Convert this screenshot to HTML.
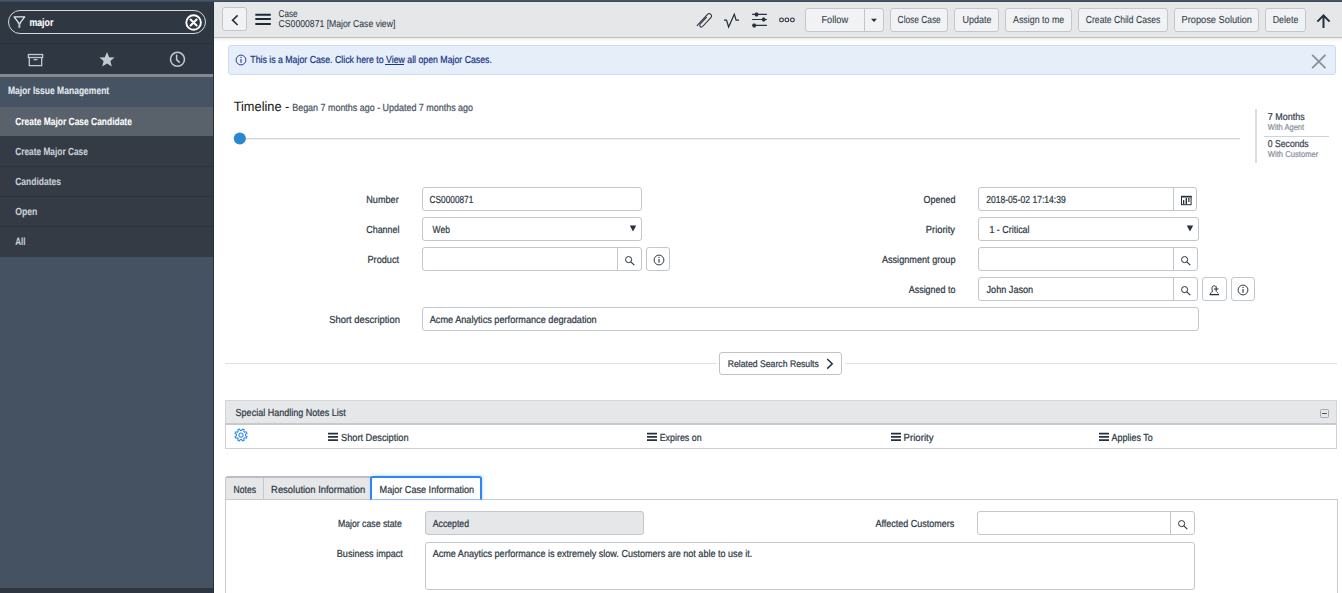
<!DOCTYPE html>
<html><head><meta charset="utf-8">
<style>
html,body{margin:0;padding:0;}
body{width:1342px;height:593px;overflow:hidden;position:relative;background:#fff;font-family:"Liberation Sans",sans-serif;}
.b{position:absolute;box-sizing:border-box;}
.ov{position:absolute;left:0;top:0;z-index:10;pointer-events:none;}
.btn{position:absolute;box-sizing:border-box;height:24px;top:8px;background:#f1f2f4;border:1px solid #c3c7cb;border-radius:3px;}
.inp{position:absolute;box-sizing:border-box;height:24px;background:#fff;border:1px solid #c3c6ca;border-radius:3px;}
.ico{position:absolute;z-index:5;}
</style></head><body>
<!-- top strip -->
<div class="b" style="left:0;top:0;width:1342px;height:2px;background:linear-gradient(#475666 0,#475666 1px,#3d4b5b 1px);z-index:3"></div>
<!-- NAV -->
<div class="b" style="left:0;top:2px;width:213px;height:591px;background:#2f3842"></div>
<div class="b" style="left:213px;top:2px;width:1px;height:591px;background:#29303a"></div>
<div class="b" style="left:8px;top:10px;width:198px;height:24px;border:1.5px solid #d8d9db;border-radius:12px"></div>
<svg class="ico" style="left:12px;top:15px" width="16" height="16" viewBox="0 0 16 16">
  <path d="M2.1 1.9 H12.7 L8.5 7.3 V8.2 H6.3 V7.3 Z" fill="none" stroke="#e8eaec" stroke-width="1.25" stroke-linejoin="round"/>
  <path d="M6.9 8.6 V12.6 H7.9 V8.6" fill="#aeb4bb" stroke="#c9ced4" stroke-width="0.9"/>
</svg>
<svg class="ico" style="left:184px;top:13px" width="19" height="19" viewBox="0 0 19 19">
  <circle cx="9.6" cy="9.5" r="7.3" fill="none" stroke="#ffffff" stroke-width="1.9"/>
  <path d="M6.6 6.5 L12.6 12.5 M12.6 6.5 L6.6 12.5" stroke="#ffffff" stroke-width="2.1" stroke-linecap="round"/>
</svg>
<div class="b" style="left:0;top:43px;width:213px;height:1px;background:#29303a"></div>
<!-- icons row -->
<svg class="ico" style="left:26px;top:52px" width="19" height="16" viewBox="0 0 19 16">
  <rect x="2.4" y="2.5" width="14.2" height="3" fill="none" stroke="#c4cad1" stroke-width="1.3"/>
  <path d="M3.3 5.5 V13.6 H15.7 V5.5" fill="none" stroke="#c4cad1" stroke-width="1.3"/>
  <path d="M7.6 7.6 H11.4" stroke="#c4cad1" stroke-width="1.3"/>
</svg>
<svg class="ico" style="left:98px;top:51px" width="18" height="17" viewBox="0 0 18 17">
  <path d="M9 1 L11.2 6.2 L16.6 6.5 L12.4 10 L13.8 15.5 L9 12.4 L4.2 15.5 L5.6 10 L1.4 6.5 L6.8 6.2 Z" fill="#c2c8cf"/>
</svg>
<svg class="ico" style="left:168px;top:50px" width="19" height="19" viewBox="0 0 19 19">
  <circle cx="9.5" cy="9.3" r="7" fill="none" stroke="#c4cad1" stroke-width="1.5"/>
  <path d="M8.6 4.4 V9.6 L11.6 12.6" fill="none" stroke="#c4cad1" stroke-width="1.5"/>
</svg>
<div class="b" style="left:0;top:74px;width:213px;height:3px;background:#83898f"></div>
<div class="b" style="left:0;top:77px;width:213px;height:30px;background:#455363"></div>
<div class="b" style="left:0;top:107px;width:213px;height:29px;background:#59616a"></div>
<div class="b" style="left:0;top:136px;width:213px;height:121px;background:#343b45"></div>
<div class="b" style="left:0;top:166px;width:213px;height:1px;background:#2d333b"></div>
<div class="b" style="left:0;top:196px;width:213px;height:1px;background:#2d333b"></div>
<div class="b" style="left:0;top:226px;width:213px;height:1px;background:#2d333b"></div>
<div class="b" style="left:0;top:257px;width:213px;height:331px;background:#455262"></div>
<div class="b" style="left:0;top:588px;width:213px;height:5px;background:#2e3641"></div>

<!-- HEADER -->
<div class="b" style="left:214px;top:2px;width:1128px;height:35px;background:#e6e7e9"></div>
<div class="b" style="left:214px;top:37px;width:1128px;height:1px;background:#bcc0c4"></div>
<div class="b" style="left:214px;top:38px;width:1128px;height:4px;background:linear-gradient(#efefef,#ffffff)"></div>
<div class="btn" style="left:222px;top:7px;width:25px"></div>
<svg class="ico" style="left:228px;top:13px" width="14" height="14" viewBox="0 0 14 14">
  <path d="M9.6 2.4 L4.6 7.2 L9.6 12" fill="none" stroke="#26313c" stroke-width="1.6"/>
</svg>
<svg class="ico" style="left:254px;top:12px" width="18" height="15" viewBox="0 0 18 15">
  <path d="M1.3 2.86 H16.8 M1.3 6.94 H16.8 M1.3 11.94 H16.8" stroke="#1f2a35" stroke-width="2"/>
</svg>
<!-- toolbar icons -->
<svg class="ico" style="left:692px;top:8px" width="110" height="24" viewBox="0 0 110 24">
  <g transform="translate(12.6 12.2) rotate(-47)" fill="none" stroke="#26313c" stroke-width="1.05">
    <path d="M-9.4 -1.8 H6.2 A2.3 2.3 0 0 1 6.2 2.8 H-6 A1.65 1.65 0 0 1 -6 -0.5 H3.6"/>
  </g>
  <path d="M32 12.1 H34.5 L36.6 19 L42.3 6.3 L44.1 12.1 H47" fill="none" stroke="#26313c" stroke-width="1.25" stroke-linejoin="miter"/>
  <path d="M60.1 6.4 H74.9 M60.1 11.5 H74.9 M60.1 17.4 H74.9" stroke="#26313c" stroke-width="1.1"/>
  <rect x="62.9" y="4.4" width="3.2" height="4" rx="1.2" fill="#26313c"/>
  <rect x="70.1" y="9.5" width="3.2" height="4" rx="1.2" fill="#26313c"/>
  <rect x="60.6" y="15.4" width="3.2" height="4" rx="1.2" fill="#26313c"/>
  <circle cx="89.5" cy="11.9" r="1.9" fill="none" stroke="#26313c" stroke-width="1.1"/>
  <circle cx="94.9" cy="11.9" r="1.9" fill="none" stroke="#26313c" stroke-width="1.1"/>
  <circle cx="100.4" cy="11.9" r="1.9" fill="none" stroke="#26313c" stroke-width="1.1"/>
</svg>
<div class="btn" style="left:805px;width:79px"></div>
<div class="b" style="left:864px;top:9px;width:1px;height:22px;background:#c3c7cb"></div>
<svg class="ico" style="left:869px;top:17px" width="10" height="6" viewBox="0 0 10 6">
  <path d="M2 1.8 H8 L5 5 Z" fill="#26313c"/>
</svg>
<div class="btn" style="left:890px;width:58px"></div>
<div class="btn" style="left:954px;width:45px"></div>
<div class="btn" style="left:1005px;width:67px"></div>
<div class="btn" style="left:1078px;width:90px"></div>
<div class="btn" style="left:1174px;width:85px"></div>
<div class="btn" style="left:1265px;width:41px"></div>
<svg class="ico" style="left:1315px;top:13px" width="17" height="16" viewBox="0 0 17 16">
  <path d="M8.5 15 V2.6 M2.4 8.6 L8.5 2.4 L14.6 8.6" fill="none" stroke="#26313c" stroke-width="2"/>
</svg>

<!-- BANNER -->
<div class="b" style="left:228px;top:45px;width:1108px;height:30px;background:#e5eef9;border:1px solid #c8dcf3;border-radius:3px"></div>
<svg class="ico" style="left:233.8px;top:52.9px" width="14" height="14" viewBox="0 0 14 14"><circle cx="7" cy="7" r="4.9" fill="none" stroke="#22398a" stroke-width="0.95"/><path d="M7 5.9 V9.7" stroke="#22398a" stroke-width="1.1"/><circle cx="7" cy="4.4" r="0.65" fill="#22398a"/></svg>
<div class="b" style="left:385px;top:64px;width:19px;height:1px;background:#22398a;z-index:11"></div>
<svg class="ico" style="left:1310px;top:53px" width="17" height="17" viewBox="0 0 17 17">
  <path d="M2.2 1.8 L15.4 15.2 M15.4 1.8 L2.2 15.2" stroke="#8a9098" stroke-width="1.8"/>
</svg>

<!-- TIMELINE -->
<div class="b" style="left:240px;top:138px;width:1000px;height:1px;background:#d3d5d8"></div>
<div class="b" style="left:240px;top:139px;width:1000px;height:1px;background:#eceeef"></div>
<svg class="ico" style="left:228px;top:128px" width="24" height="22" viewBox="0 0 24 22"><circle cx="11.8" cy="10.5" r="6.05" fill="#2a87cf"/></svg>
<div class="b" style="left:1255px;top:109px;width:2px;height:54px;background:#dcdee1"></div>
<div class="b" style="left:1264px;top:136px;width:65px;height:1px;background:#cfd2d6"></div>

<!-- FORM -->
<div class="inp" style="left:422px;top:187px;width:220px"></div>
<div class="inp" style="left:422px;top:217px;width:220px"></div>
<svg class="ico" style="left:628px;top:224px" width="10" height="9" viewBox="0 0 10 9"><path d="M1.8 1.5 H8.2 L5 7.6 Z" fill="#26313c"/></svg>
<div class="inp" style="left:422px;top:247px;width:220px"></div>
<div class="b" style="left:617px;top:248px;width:1px;height:22px;background:#c3c6ca"></div>
<div class="inp" style="left:646px;top:247px;width:24px"></div>
<div class="inp" style="left:422px;top:307px;width:777px"></div>

<div class="inp" style="left:978px;top:187px;width:219px"></div>
<div class="b" style="left:1173px;top:188px;width:1px;height:22px;background:#c3c6ca"></div>
<svg class="ico" style="left:1180px;top:194px" width="13" height="12" viewBox="0 0 13 12">
  <rect x="1.5" y="2.4" width="9.6" height="8.3" fill="none" stroke="#26313c" stroke-width="1"/>
  <rect x="1" y="1.9" width="10.6" height="1.6" fill="#26313c"/>
  <rect x="3" y="6.1" width="1.3" height="4.2" fill="#26313c"/><rect x="5.6" y="4" width="1.4" height="6.3" fill="#26313c"/><rect x="8.2" y="4" width="1.3" height="3.9" fill="#26313c"/>
</svg>
<div class="inp" style="left:978px;top:217px;width:221px"></div>
<svg class="ico" style="left:1185px;top:224px" width="10" height="9" viewBox="0 0 10 9"><path d="M1.8 1.5 H8.2 L5 7.6 Z" fill="#26313c"/></svg>
<div class="inp" style="left:978px;top:247px;width:220px"></div>
<div class="b" style="left:1173px;top:248px;width:1px;height:22px;background:#c3c6ca"></div>
<div class="inp" style="left:978px;top:277px;width:220px"></div>
<div class="b" style="left:1173px;top:278px;width:1px;height:22px;background:#c3c6ca"></div>
<div class="inp" style="left:1202px;top:277px;width:25px"></div>
<div class="inp" style="left:1231px;top:277px;width:24px"></div>

<!-- search icons -->
<svg class="ico" style="left:622px;top:253px" width="14" height="14" viewBox="0 0 14 14"><circle cx="6.6" cy="6.6" r="3.05" fill="none" stroke="#26313c" stroke-width="1"/><path d="M8.8 8.8 L12.3 12.1" stroke="#26313c" stroke-width="1.05"/></svg>
<svg class="ico" style="left:1178px;top:253px" width="14" height="14" viewBox="0 0 14 14"><circle cx="6.6" cy="6.6" r="3.05" fill="none" stroke="#26313c" stroke-width="1"/><path d="M8.8 8.8 L12.3 12.1" stroke="#26313c" stroke-width="1.05"/></svg>
<svg class="ico" style="left:1178px;top:283px" width="14" height="14" viewBox="0 0 14 14"><circle cx="6.6" cy="6.6" r="3.05" fill="none" stroke="#26313c" stroke-width="1"/><path d="M8.8 8.8 L12.3 12.1" stroke="#26313c" stroke-width="1.05"/></svg>
<svg class="ico" style="left:1175px;top:517px" width="14" height="14" viewBox="0 0 14 14"><circle cx="6.6" cy="6.6" r="3.05" fill="none" stroke="#26313c" stroke-width="1"/><path d="M8.8 8.8 L12.3 12.1" stroke="#26313c" stroke-width="1.05"/></svg>
<!-- info icons -->
<svg class="ico" style="left:651.5px;top:252.60000000000002px" width="14" height="14" viewBox="0 0 14 14"><circle cx="7" cy="7" r="4.9" fill="none" stroke="#26313c" stroke-width="0.95"/><path d="M7 5.9 V9.7" stroke="#26313c" stroke-width="1.1"/><circle cx="7" cy="4.4" r="0.65" fill="#26313c"/></svg>
<svg class="ico" style="left:1236px;top:282.8px" width="14" height="14" viewBox="0 0 14 14"><circle cx="7" cy="7" r="4.9" fill="none" stroke="#26313c" stroke-width="0.95"/><path d="M7 5.9 V9.7" stroke="#26313c" stroke-width="1.1"/><circle cx="7" cy="4.4" r="0.65" fill="#26313c"/></svg>
<!-- assign icon -->
<svg class="ico" style="left:1206px;top:282px" width="16" height="15" viewBox="0 0 16 15">
  <path d="M3.6 12.6 H13" stroke="#26313c" stroke-width="1.3"/>
  <path d="M4.4 12 C4.4 10.6 5.6 10 6.6 9.7 C6.2 8.6 6 7.4 6 6.2 C6 4.6 6.9 3.8 8.2 3.8 C9.2 3.8 9.8 4.2 10 4.8" fill="none" stroke="#26313c" stroke-width="0.95"/>
  <path d="M10.6 9.8 C10.9 10.2 11.6 10.6 12.4 11.2" fill="none" stroke="#26313c" stroke-width="0.9"/>
  <path d="M10.2 4.6 V9.6 M7.9 7 H12.6" stroke="#26313c" stroke-width="1.05"/>
</svg>
<!-- related search -->
<div class="b" style="left:225px;top:363px;width:491px;height:1px;background:#dcdee1"></div>
<div class="b" style="left:845px;top:363px;width:492px;height:1px;background:#dcdee1"></div>
<div class="inp" style="left:719px;top:352px;width:123px;height:23px;border-color:#bfc3c8"></div>
<svg class="ico" style="left:824px;top:357px" width="12" height="14" viewBox="0 0 12 14">
  <path d="M3.2 2 L8.2 6.8 L3.2 11.6" fill="none" stroke="#26313c" stroke-width="1.5"/>
</svg>

<!-- special handling -->
<div class="b" style="left:225px;top:400px;width:1112px;height:49px;border:1px solid #cfd2d5;background:#fff"></div>
<div class="b" style="left:225px;top:400px;width:1112px;height:24px;background:#e6e7e9;border:1px solid #d3d6d9;border-bottom:none"></div>
<div class="b" style="left:225px;top:423px;width:1112px;height:2px;background:#c6c9cd"></div>
<div class="b" style="left:1320px;top:409px;width:9px;height:9px;border:1px solid #a3a8ae;border-radius:1.5px"></div>
<div class="b" style="left:1322px;top:413px;width:5px;height:1px;background:#4d555e"></div>
<svg class="ico" style="left:233px;top:427px" width="16" height="16" viewBox="0 0 16 16">
  <path d="M12.50 8.00 L12.45 8.67 L14.03 9.45 L13.29 11.24 L11.62 10.68 L11.18 11.18 L10.68 11.62 L11.24 13.29 L9.45 14.03 L8.67 12.45 L8.00 12.50 L7.33 12.45 L6.55 14.03 L4.76 13.29 L5.32 11.62 L4.82 11.18 L4.38 10.68 L2.71 11.24 L1.97 9.45 L3.55 8.67 L3.50 8.00 L3.55 7.33 L1.97 6.55 L2.71 4.76 L4.38 5.32 L4.82 4.82 L5.32 4.38 L4.76 2.71 L6.55 1.97 L7.33 3.55 L8.00 3.50 L8.67 3.55 L9.45 1.97 L11.24 2.71 L10.68 4.38 L11.18 4.82 L11.62 5.32 L13.29 4.76 L14.03 6.55 L12.45 7.33 Z" fill="none" stroke="#2f8af5" stroke-width="1.05" stroke-linejoin="round"/>
  <circle cx="8" cy="8" r="2.1" fill="none" stroke="#2f8af5" stroke-width="1.05"/>
</svg>
<svg class="ico" style="left:327px;top:432px" width="12" height="10" viewBox="0 0 12 10"><path d="M1 1.6 H11 M1 4.9 H11 M1 8.2 H11" stroke="#26313c" stroke-width="1.7"/></svg>
<svg class="ico" style="left:646px;top:432px" width="12" height="10" viewBox="0 0 12 10"><path d="M1 1.6 H11 M1 4.9 H11 M1 8.2 H11" stroke="#26313c" stroke-width="1.7"/></svg>
<svg class="ico" style="left:890px;top:432px" width="12" height="10" viewBox="0 0 12 10"><path d="M1 1.6 H11 M1 4.9 H11 M1 8.2 H11" stroke="#26313c" stroke-width="1.7"/></svg>
<svg class="ico" style="left:1098px;top:432px" width="12" height="10" viewBox="0 0 12 10"><path d="M1 1.6 H11 M1 4.9 H11 M1 8.2 H11" stroke="#26313c" stroke-width="1.7"/></svg>

<!-- tabs -->
<div class="b" style="left:225px;top:499px;width:1113px;height:94px;border:1px solid #c8cbce;border-bottom:none"></div>
<div class="b" style="left:225px;top:476px;width:147px;height:24px;background:#e6e7e9;border:1px solid #c6c9cd;border-top:2px solid #babec3;border-radius:3px 0 0 0"></div>
<div class="b" style="left:263px;top:478px;width:1px;height:21px;background:#c3c6ca"></div>
<div class="b" style="left:370px;top:476px;width:112px;height:24px;background:#fff;border:2px solid #2f86f2;border-bottom:1px solid #8fc0f7;border-radius:3px 3px 0 0;box-shadow:1px -1px 3px rgba(47,134,242,0.25)"></div>
<div class="inp" style="left:425px;top:511px;width:219px;background:#e6e7e9;border-color:#c3c6ca"></div>
<div class="inp" style="left:977px;top:511px;width:218px"></div>
<div class="b" style="left:1170px;top:512px;width:1px;height:22px;background:#c3c6ca"></div>
<div class="inp" style="left:425px;top:542px;width:770px;height:48px"></div>

<svg class="ov" width="1342" height="593" font-family="Liberation Sans, sans-serif" text-rendering="geometricPrecision"><text transform="translate(29.40 26.40) scale(0.8146 1)" font-size="10.8" font-weight="700" fill="#ffffff" stroke="#ffffff" stroke-width="0.1">major</text>
<text transform="translate(7.90 94.40) scale(0.8195 1)" font-size="10.4" font-weight="700" fill="#e4e8ec" stroke="#e4e8ec" stroke-width="0.1">Major Issue Management</text>
<text transform="translate(15.20 124.80) scale(0.8111 1)" font-size="10.4" font-weight="700" fill="#ffffff" stroke="#ffffff" stroke-width="0.1">Create Major Case Candidate</text>
<text transform="translate(15.20 154.80) scale(0.8010 1)" font-size="10.4" font-weight="700" fill="#c9d0d7" stroke="#c9d0d7" stroke-width="0.1">Create Major Case</text>
<text transform="translate(15.20 184.70) scale(0.8181 1)" font-size="10.4" font-weight="700" fill="#c9d0d7" stroke="#c9d0d7" stroke-width="0.1">Candidates</text>
<text transform="translate(15.20 215.00) scale(0.8356 1)" font-size="10.4" font-weight="700" fill="#c9d0d7" stroke="#c9d0d7" stroke-width="0.1">Open</text>
<text transform="translate(15.20 245.00) scale(0.7767 1)" font-size="10.4" font-weight="700" fill="#c9d0d7" stroke="#c9d0d7" stroke-width="0.1">All</text>
<text transform="translate(278.60 17.10) scale(0.8157 1)" font-size="10" font-weight="400" fill="#2c3843" stroke="#2c3843" stroke-width="0.08">Case</text>
<text transform="translate(278.60 26.80) scale(0.8641 1)" font-size="10" font-weight="400" fill="#2c3843" stroke="#2c3843" stroke-width="0.08">CS0000871 [Major Case view]</text>
<text transform="translate(821.40 23.00) scale(0.9075 1)" font-size="10.2" font-weight="400" fill="#333f4b" stroke="#333f4b" stroke-width="0.08">Follow</text>
<text transform="translate(897.60 23.00) scale(0.8190 1)" font-size="10.2" font-weight="400" fill="#333f4b" stroke="#333f4b" stroke-width="0.08">Close Case</text>
<text transform="translate(962.40 23.00) scale(0.8859 1)" font-size="10.2" font-weight="400" fill="#333f4b" stroke="#333f4b" stroke-width="0.08">Update</text>
<text transform="translate(1013.00 23.00) scale(0.8696 1)" font-size="10.2" font-weight="400" fill="#333f4b" stroke="#333f4b" stroke-width="0.08">Assign to me</text>
<text transform="translate(1085.80 23.00) scale(0.8432 1)" font-size="10.2" font-weight="400" fill="#333f4b" stroke="#333f4b" stroke-width="0.08">Create Child Cases</text>
<text transform="translate(1181.50 23.00) scale(0.9087 1)" font-size="10.2" font-weight="400" fill="#333f4b" stroke="#333f4b" stroke-width="0.08">Propose Solution</text>
<text transform="translate(1272.70 23.00) scale(0.8696 1)" font-size="10.2" font-weight="400" fill="#333f4b" stroke="#333f4b" stroke-width="0.08">Delete</text>
<text transform="translate(250.30 63.00) scale(0.8592 1)" font-size="10.2" font-weight="400" fill="#22398a" stroke="#22398a" stroke-width="0.24">This is a Major Case. Click here to View all open Major Cases.</text>
<text transform="translate(233.70 110.90) scale(0.9546 1)" font-size="13.4" font-weight="400" fill="#1d1d1d" stroke="#1d1d1d" stroke-width="0.08">Timeline -</text>
<text transform="translate(292.20 110.90) scale(0.8771 1)" font-size="10.2" font-weight="400" fill="#4a5563" stroke="#4a5563" stroke-width="0.24">Began 7 months ago - Updated 7 months ago</text>
<text transform="translate(1267.80 119.80) scale(0.9071 1)" font-size="9.9" font-weight="400" fill="#3a4452" stroke="#3a4452" stroke-width="0.24">7 Months</text>
<text transform="translate(1267.80 130.00) scale(0.8723 1)" font-size="8.6" font-weight="400" fill="#8a94a1" stroke="#8a94a1" stroke-width="0.24">With Agent</text>
<text transform="translate(1267.80 147.00) scale(0.8753 1)" font-size="9.9" font-weight="400" fill="#3a4452" stroke="#3a4452" stroke-width="0.24">0 Seconds</text>
<text transform="translate(1267.80 156.90) scale(0.8901 1)" font-size="8.6" font-weight="400" fill="#8a94a1" stroke="#8a94a1" stroke-width="0.24">With Customer</text>
<text transform="translate(366.30 203.10) scale(0.8930 1)" font-size="10.2" font-weight="400" fill="#2f3b47" stroke="#2f3b47" stroke-width="0.24">Number</text>
<text transform="translate(366.30 233.10) scale(0.8730 1)" font-size="10.2" font-weight="400" fill="#2f3b47" stroke="#2f3b47" stroke-width="0.24">Channel</text>
<text transform="translate(367.50 263.20) scale(0.8986 1)" font-size="10.2" font-weight="400" fill="#2f3b47" stroke="#2f3b47" stroke-width="0.24">Product</text>
<text transform="translate(329.20 323.20) scale(0.9250 1)" font-size="10.2" font-weight="400" fill="#2f3b47" stroke="#2f3b47" stroke-width="0.24">Short description</text>
<text transform="translate(923.60 203.10) scale(0.8801 1)" font-size="10.2" font-weight="400" fill="#2f3b47" stroke="#2f3b47" stroke-width="0.24">Opened</text>
<text transform="translate(925.80 233.10) scale(0.9202 1)" font-size="10.2" font-weight="400" fill="#2f3b47" stroke="#2f3b47" stroke-width="0.24">Priority</text>
<text transform="translate(881.90 263.20) scale(0.8963 1)" font-size="10.2" font-weight="400" fill="#2f3b47" stroke="#2f3b47" stroke-width="0.24">Assignment group</text>
<text transform="translate(908.70 293.20) scale(0.8792 1)" font-size="10.2" font-weight="400" fill="#2f3b47" stroke="#2f3b47" stroke-width="0.24">Assigned to</text>
<text transform="translate(429.60 203.10) scale(0.8126 1)" font-size="10.2" font-weight="400" fill="#2f3b47" stroke="#2f3b47" stroke-width="0.24">CS0000871</text>
<text transform="translate(432.60 233.10) scale(0.8342 1)" font-size="10.2" font-weight="400" fill="#2f3b47" stroke="#2f3b47" stroke-width="0.24">Web</text>
<text transform="translate(986.20 203.10) scale(0.8406 1)" font-size="10.2" font-weight="400" fill="#2f3b47" stroke="#2f3b47" stroke-width="0.24">2018-05-02 17:14:39</text>
<text transform="translate(989.40 233.10) scale(0.8753 1)" font-size="10.2" font-weight="400" fill="#2f3b47" stroke="#2f3b47" stroke-width="0.24">1 - Critical</text>
<text transform="translate(986.50 293.20) scale(0.8962 1)" font-size="10.2" font-weight="400" fill="#2f3b47" stroke="#2f3b47" stroke-width="0.24">John Jason</text>
<text transform="translate(429.70 323.20) scale(0.8991 1)" font-size="10.2" font-weight="400" fill="#2f3b47" stroke="#2f3b47" stroke-width="0.24">Acme Analytics performance degradation</text>
<text transform="translate(727.70 366.50) scale(0.9041 1)" font-size="9.6" font-weight="400" fill="#333f4b" stroke="#333f4b" stroke-width="0.24">Related Search Results</text>
<text transform="translate(235.60 416.00) scale(0.8842 1)" font-size="10.2" font-weight="400" fill="#2f3b47" stroke="#2f3b47" stroke-width="0.24">Special Handling Notes List</text>
<text transform="translate(341.00 441.00) scale(0.9044 1)" font-size="10.2" font-weight="400" fill="#2f3b47" stroke="#2f3b47" stroke-width="0.24">Short Desciption</text>
<text transform="translate(659.70 441.00) scale(0.8701 1)" font-size="10.2" font-weight="400" fill="#2f3b47" stroke="#2f3b47" stroke-width="0.24">Expires on</text>
<text transform="translate(903.60 441.00) scale(0.9447 1)" font-size="10.2" font-weight="400" fill="#2f3b47" stroke="#2f3b47" stroke-width="0.24">Priority</text>
<text transform="translate(1111.60 441.00) scale(0.8788 1)" font-size="10.2" font-weight="400" fill="#2f3b47" stroke="#2f3b47" stroke-width="0.24">Applies To</text>
<text transform="translate(233.60 493.00) scale(0.8409 1)" font-size="10.2" font-weight="400" fill="#2f3b47" stroke="#2f3b47" stroke-width="0.24">Notes</text>
<text transform="translate(271.10 493.00) scale(0.9233 1)" font-size="10.2" font-weight="400" fill="#2f3b47" stroke="#2f3b47" stroke-width="0.24">Resolution Information</text>
<text transform="translate(379.60 493.00) scale(0.8925 1)" font-size="10.2" font-weight="400" fill="#2f3b47" stroke="#2f3b47" stroke-width="0.24">Major Case Information</text>
<text transform="translate(337.90 526.70) scale(0.8552 1)" font-size="10.2" font-weight="400" fill="#2f3b47" stroke="#2f3b47" stroke-width="0.24">Major case state</text>
<text transform="translate(432.80 526.70) scale(0.8526 1)" font-size="10.2" font-weight="400" fill="#2f3b47" stroke="#2f3b47" stroke-width="0.24">Accepted</text>
<text transform="translate(875.40 526.70) scale(0.8825 1)" font-size="10.2" font-weight="400" fill="#2f3b47" stroke="#2f3b47" stroke-width="0.24">Affected Customers</text>
<text transform="translate(336.80 557.20) scale(0.8905 1)" font-size="10.2" font-weight="400" fill="#2f3b47" stroke="#2f3b47" stroke-width="0.24">Business impact</text>
<text transform="translate(432.70 557.20) scale(0.8887 1)" font-size="10.2" font-weight="400" fill="#2f3b47" stroke="#2f3b47" stroke-width="0.24">Acme Anaytics performance is extremely slow. Customers are not able to use it.</text></svg>
</body></html>
